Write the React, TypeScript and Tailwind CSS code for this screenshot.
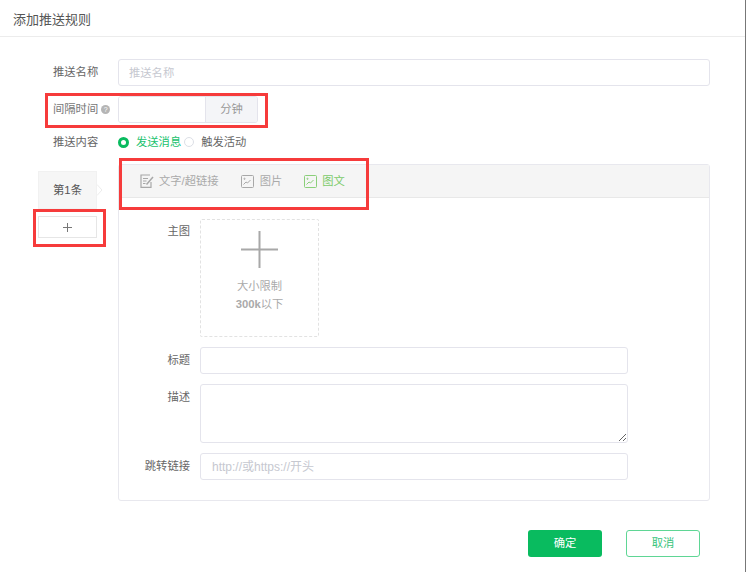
import React from 'react';

const FONT = 'font-["Liberation_Sans","Noto_Sans_CJK_SC",sans-serif]';

const EditIcon = () => (
  <svg width="14" height="14" viewBox="0 0 14 14" fill="none" stroke="#a8a8a8" strokeWidth="1.2">
    <path d="M11 8v5.400H1V1h9" />
    <path d="M3 4.500h5M3 7h3.500M3 9.500h2.500" />
    <path d="M6.500 10.500L13 3" strokeWidth="1.500" />
  </svg>
);

const PicIcon = ({ color }: { color: string }) => (
  <svg width="13" height="13" viewBox="0 0 13 13" fill="none" stroke={color} strokeWidth="1">
    <rect x="0.5" y="0.500" width="12" height="12" rx="1" />
    <path d="M2.500 9.500l2.500-2.500 1.500 1 3-3" />
    <circle cx="3.500" cy="3.800" r="0.600" />
  </svg>
);

const PlusMark = ({ size, stroke, color }: { size: number; stroke: number; color: string }) => (
  <svg width={size} height={size} viewBox={`0 0 ${size} ${size}`} fill="none" stroke={color} strokeWidth={stroke}>
    <path d={`M${size / 2} 0V${size}M0 ${size / 2}H${size}`} />
  </svg>
);

const inputCls = 'h-[27px] w-[428px] rounded-[3px] border border-[#e4e4ec] bg-white px-[11px] text-[11.300px] outline-none placeholder:text-[#c6c8d0]';
const subLabel = 'w-[71px] shrink-0 text-right text-[11.300px] leading-[27px] text-[#666]';

export default function App() {
  return (
    <div className={`relative h-[572px] w-[746px] overflow-hidden border-r border-r-[#777] bg-white ${FONT}`}>
      <div className="h-[37px] border-b border-[#ececec] pl-[13px] text-[13px] leading-[40px] text-[#555]">添加推送规则</div>

      <div className="flex flex-col pt-[22px]">
        <div className="flex h-[27px] items-center pl-[53px]">
          <span className="w-[65px] text-[11.300px] text-[#666]">推送名称</span>
          <input readOnly placeholder="推送名称" className="h-[27px] w-[592px] rounded-[3px] border border-[#e4e4ec] px-[10px] text-[11.300px] outline-none placeholder:text-[#c6c8d0]" />
        </div>

        <div className="mt-[10px] flex h-[27px] items-center pl-[53px]">
          <span className="flex w-[65px] items-center text-[11.300px] text-[#777]">
            间隔时间
            <span className="ml-[3px] flex h-[9px] w-[9px] items-center justify-center rounded-full bg-[#b5b5b5] text-[7px] leading-none text-white">?</span>
          </span>
          <div className="flex h-[27px] w-[140px] overflow-hidden rounded-[3px] border border-[#e4e4ec]">
            <div className="w-[86px] bg-white" />
            <div className="flex-1 border-l border-[#e4e4ec] bg-[#f4f5f8] text-center text-[11.300px] leading-[25px] text-[#999]">分钟</div>
          </div>
        </div>

        <div className="mt-[8px] flex h-[22px] items-center pl-[53px] text-[11.300px]">
          <span className="w-[65px] text-[#666]">推送内容</span>
          <span className="flex h-[11px] w-[11px] items-center justify-center rounded-full border-[3px] border-[#09bb5f] bg-white" />
          <span className="ml-[7px] text-[#21c26e]">发送消息</span>
          <span className="ml-[3px] h-[10px] w-[10px] rounded-full border border-[#dcdfe6] bg-white" />
          <span className="ml-[7px] text-[#666]">触发活动</span>
        </div>

        <div className="mt-[11px] flex pl-[38px]">
          <div className="flex w-[80px] flex-col pt-[7px]">
            <div className="relative h-[38px] w-[59px] border border-[#f1f1f1] bg-[#f6f6f6] text-center text-[11.300px] leading-[36px] text-[#555]">
              第1条
              <svg className="absolute left-[58px] top-[12px]" width="6" height="12" viewBox="0 0 6 12" fill="#fff" stroke="#ececec">
                <path d="M0 0.500L5 6L0 11.500" />
              </svg>
            </div>
            <div className="mt-[7px] flex h-[22px] w-[59px] items-center justify-center border border-[#e6e6e6] bg-white">
              <PlusMark size={9} stroke={1} color="#777" />
            </div>
          </div>

          <div className="h-[337px] w-[592px] rounded-[3px] border border-[#e8e8ee]">
            <div className="flex h-[33px] items-center border-b border-[#e8e8e8] bg-[#f5f5f5] pl-[21px] text-[11.300px]">
              <EditIcon />
              <span className="ml-[5px] text-[#aaa]">文字/超链接</span>
              <span className="ml-[22px] flex"><PicIcon color="#a8a8a8" /></span>
              <span className="ml-[6px] text-[#aaa]">图片</span>
              <span className="ml-[22px] flex"><PicIcon color="#8bcf7a" /></span>
              <span className="ml-[5px] text-[#7ccb6a]">图文</span>
            </div>

            <div className="pt-[21px]">
              <div className="flex items-start gap-[10px]">
                <div className="w-[71px] shrink-0 text-right text-[11.300px] leading-[25px] text-[#666]">主图</div>
                <div className="flex h-[118px] w-[119px] flex-col items-center rounded-[2px] border border-dashed border-[#e2e2e2]">
                  <div className="mt-[11px] flex"><PlusMark size={37} stroke={2} color="#a8a8a8" /></div>
                  <div className="mt-[9px] text-[11.300px] leading-[18px] text-[#aaa]">大小限制</div>
                  <div className="text-[11.300px] font-bold leading-[18px] text-[#aaa]"><span>300k</span><span className="font-normal">以下</span></div>
                </div>
              </div>

              <div className="mt-[10px] flex items-start gap-[10px]">
                <div className={subLabel}>标题</div>
                <input readOnly className={inputCls} />
              </div>
              <div className="mt-[10px] flex items-start gap-[10px]">
                <div className={subLabel}>描述</div>
                <textarea readOnly className="block h-[59px] w-[428px] rounded-[3px] border border-[#e4e4ec] outline-none" />
              </div>
              <div className="mt-[10px] flex items-start gap-[10px]">
                <div className={subLabel}>跳转链接</div>
                <input readOnly placeholder="http://或https://开头" className={`${inputCls} text-[12px]`} />
              </div>
            </div>
          </div>
        </div>

        <div className="mt-[29px] flex justify-end gap-[24px] pr-[45px] text-[11.300px]">
          <button className="h-[27px] w-[74px] rounded-[3px] bg-[#09bb5f] text-white">确定</button>
          <button className="h-[27px] w-[74px] rounded-[3px] border border-[#5fd695] bg-white text-[#38c47c]">取消</button>
        </div>
      </div>

      {/* red annotation boxes drawn over the screenshot */}
      <div className="pointer-events-none absolute left-[45px] top-[93px] h-[35px] w-[223px] border-[3px] border-[#f63b3b]" />
      <div className="pointer-events-none absolute left-[119px] top-[158px] h-[52px] w-[250px] border-[3px] border-[#f63b3b]" />
      <div className="pointer-events-none absolute left-[33px] top-[209px] h-[38px] w-[73px] border-[3px] border-[#f63b3b]" />
    </div>
  );
}
